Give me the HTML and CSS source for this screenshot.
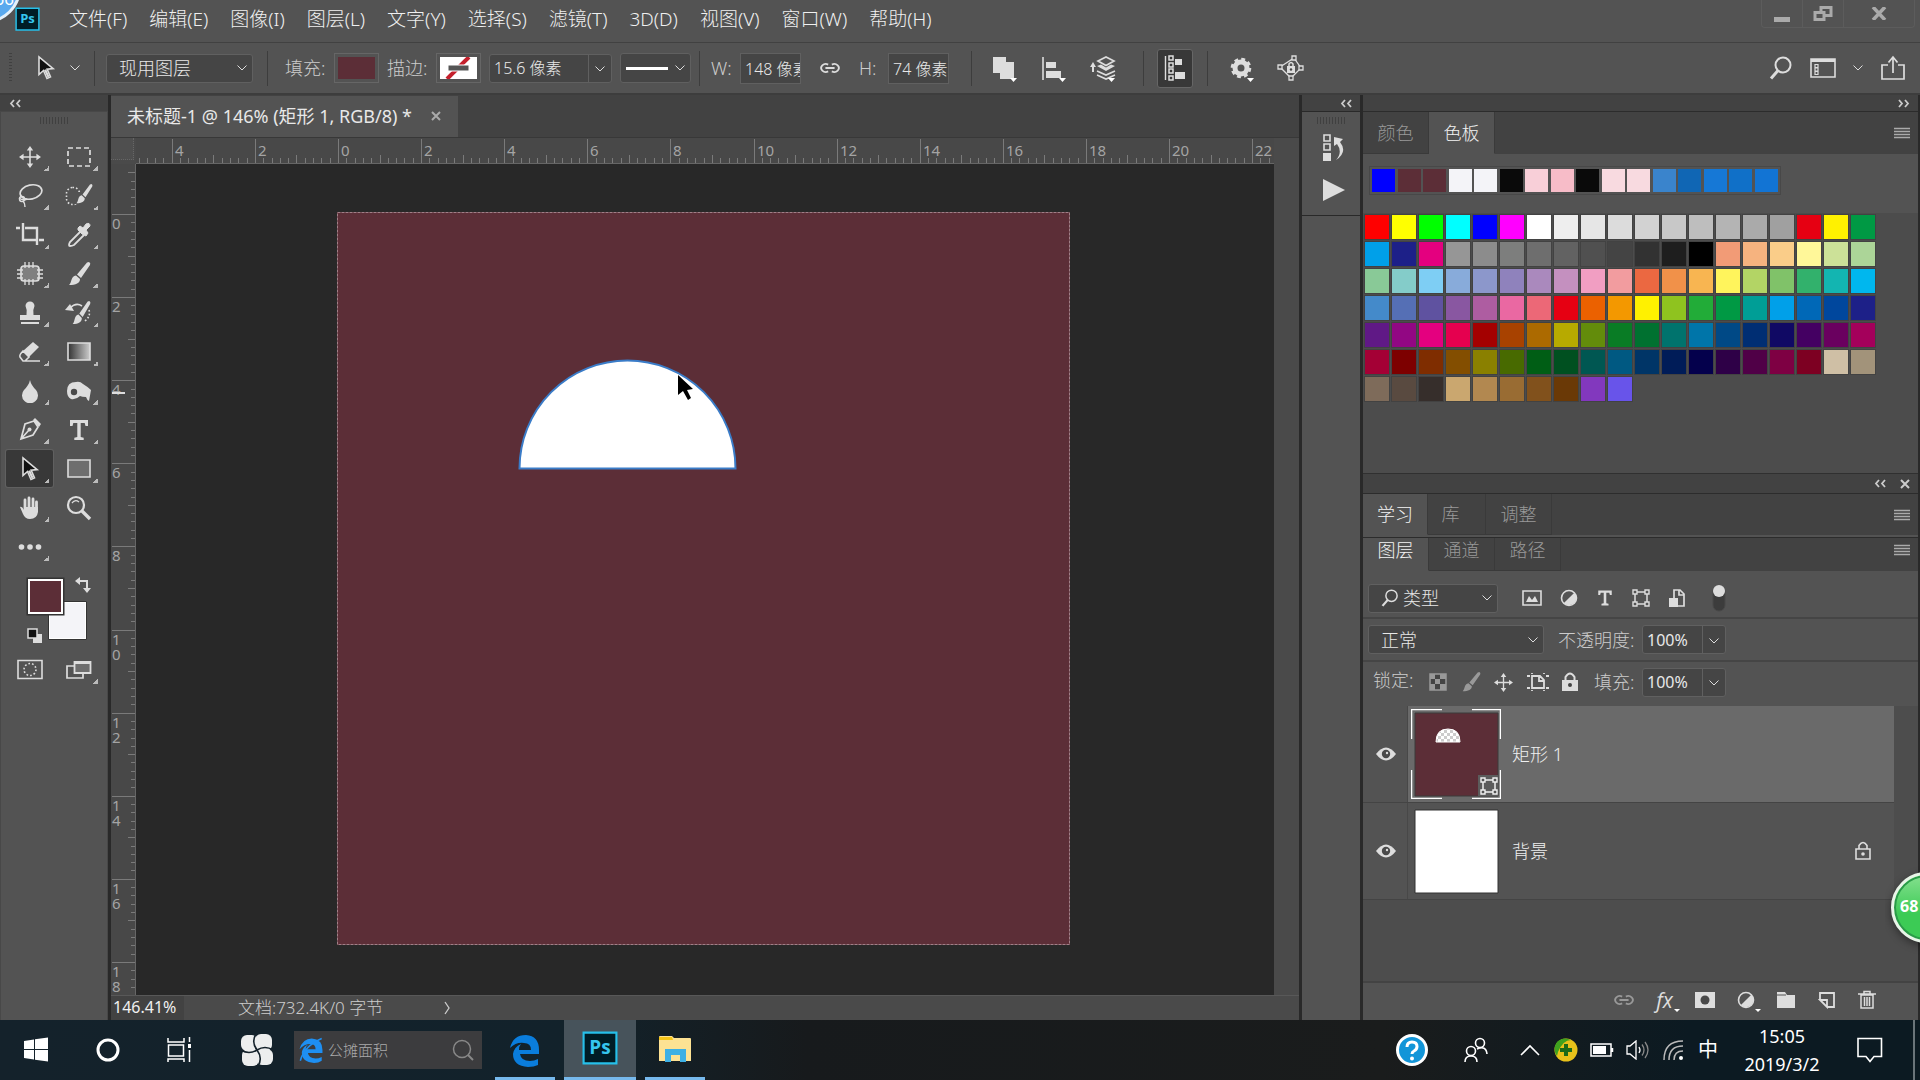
FILE: index.html
```html
<!DOCTYPE html>
<html lang="zh-CN">
<head>
<meta charset="utf-8">
<title>未标题-1 @ 146% (矩形 1, RGB/8)</title>
<link rel="stylesheet" href="styles.css">
</head>
<body>
<svg class="sprite" aria-hidden="true">
  <symbol id="chev" viewBox="0 0 10 6"><path d="M.5 .5l4.500 4.500 4.500-4.500" fill="none" stroke="currentColor" stroke-width="1"/></symbol>
  <symbol id="collapse" viewBox="0 0 12 9"><path d="M5 1L2 4.500 5 8M11 1L8 4.500 11 8" fill="none" stroke="currentColor" stroke-width="1.800"/></symbol>
  <symbol id="expand" viewBox="0 0 12 9"><path d="M1 1l3 3.500L1 8M7 1l3 3.500L7 8" fill="none" stroke="currentColor" stroke-width="1.800"/></symbol>
  <symbol id="cross" viewBox="0 0 10 10"><path d="M1 1l8 8M9 1L1 9" fill="none" stroke="currentColor" stroke-width="2"/></symbol>
  <symbol id="burger" viewBox="0 0 16 12"><path d="M0 1.500h16M0 4.500h16M0 7.500h16M0 10.500h16" stroke="currentColor" stroke-width="1.400"/></symbol>
  <symbol id="arrow" viewBox="0 0 24 26"><path d="M5 2v17.500l4.500-4 3.500 8 3.500-1.600-3.400-7.800 6-.5z" fill="#111" stroke="#ddd" stroke-width="1.600"/><path d="M10 15l3.500 7.500 2-1-3.300-7.300z" fill="#ddd"/></symbol>
  <symbol id="chain" viewBox="0 0 24 12"><path d="M10 2.300A5 4.300 0 1 0 10 9.700M14 2.300A5 4.300 0 1 1 14 9.700M7 6h10" fill="none" stroke="currentColor" stroke-width="2"/></symbol>
  <symbol id="move" viewBox="0 0 24 24"><path d="M12 3v18M3 12h18" stroke="currentColor" stroke-width="1.700"/><path d="M12 0l3.500 5h-7zM12 24l3.500-5h-7zM0 12l5-3.500v7zM24 12l-5-3.500v7z" fill="currentColor"/></symbol>
  <symbol id="brush" viewBox="0 0 24 24"><path d="M22 0q2 1 1 3L14 16l-4-3.500L20 .500zM9 13.500l4 3.500c0 4-4 6-11 6 3-2 1.500-9 7-9.500z" fill="currentColor"/></symbol>
  <symbol id="type" viewBox="0 0 24 24"><path d="M3 2h18v6h-2.500l-.8-3H13.700v14l3 .8V22H7.300v-2.200l3-.8V5H6.300l-.8 3H3z" fill="currentColor"/></symbol>
  <symbol id="lens" viewBox="0 0 24 24"><circle cx="14" cy="9" r="7.500" fill="none" stroke="currentColor" stroke-width="2"/><path d="M9 14.500L2 22.500" stroke="currentColor" stroke-width="3"/></symbol>
  <symbol id="shape" viewBox="0 0 18 18"><path d="M3 3h12v12H3z" fill="none" stroke="currentColor" stroke-width="1.500"/><path d="M1 1h4v4H1zM13 1h4v4h-4zM1 13h4v4H1zM13 13h4v4h-4z" fill="#535353" stroke="currentColor" stroke-width="1.400"/></symbol>
  <symbol id="half" viewBox="0 0 18 18"><circle cx="9" cy="9" r="7.500" fill="none" stroke="currentColor" stroke-width="1.600"/><path d="M14.300 3.700A7.500 7.500 0 0 1 3.700 14.300z" fill="currentColor"/></symbol>
  <symbol id="eye" viewBox="0 0 20 14"><path d="M0 7Q10-6 20 7 10 20 0 7z" fill="currentColor"/><circle cx="10" cy="7" r="4.200" fill="#4a4a4a"/><circle cx="11" cy="6" r="1.200" fill="#ddd"/></symbol>
  <symbol id="ps" viewBox="0 0 34 32"><path d="M1.500 1.500h31v29h-31z" fill="#001d26" stroke="#26c0ea" stroke-width="2"/></symbol>
</svg>

<header class="menubar">
  <span class="ps-badge ps-small"><svg viewBox="0 0 34 32" preserveAspectRatio="none"><use href="#ps"/></svg><b>Ps</b></span>
  <nav>
    <a href="#">文件(F)</a><a href="#">编辑(E)</a><a href="#">图像(I)</a><a href="#">图层(L)</a><a href="#">文字(Y)</a><a href="#">选择(S)</a><a href="#">滤镜(T)</a><a href="#">3D(D)</a><a href="#">视图(V)</a><a href="#">窗口(W)</a><a href="#">帮助(H)</a>
  </nav>
  <div class="winctl">
    <button aria-label="最小化"><svg width="16" height="16"><path d="M0 11h16v5H0z" fill="#aaa"/></svg></button>
    <button aria-label="还原"><svg width="20" height="16"><path d="M8 1.500h10v8H8z" fill="none" stroke="#aaa" stroke-width="3"/><path d="M2 6.500h9v7H2z" fill="#535353" stroke="#aaa" stroke-width="3"/></svg></button>
    <button aria-label="关闭" class="wclose"><svg width="16" height="13"><path d="M2 0l12 13M14 0L2 13" stroke="#aaa" stroke-width="3.500"/></svg></button>
  </div>
  <span class="ball-blue">66</span>
</header>

<section class="options">
  <span class="grip-v"></span>
  <button class="preset" aria-label="路径选择工具"><svg width="24" height="26"><use href="#arrow"/></svg><svg width="10" height="6"><use href="#chev"/></svg></button>
  <div class="group g-select"><div class="sel"><select aria-label="选择"><option>现用图层</option></select><svg width="10" height="6"><use href="#chev"/></svg></div></div>
  <div class="group g-fill">
    <span class="lbl">填充:</span><button class="chip" aria-label="填充"><i class="wine"></i></button>
    <span class="lbl">描边:</span><button class="chip" aria-label="描边"><svg width="37" height="22"><path d="M0 0h37v22H0z" fill="#fff"/><path d="M7 22L29 0" stroke="#c4202c" stroke-width="4"/><path d="M8 8h21v6H8z" fill="#555" stroke="#fff"/></svg></button>
    <div class="combo stroke-w"><input aria-label="描边宽度" value="15.6 像素"><button aria-label="描边宽度选项"><svg width="10" height="6"><use href="#chev"/></svg></button></div>
    <button class="linebtn" aria-label="描边类型"><i></i><svg width="10" height="6"><use href="#chev"/></svg></button>
  </div>
  <div class="group g-size">
    <label for="w">W:</label><input id="w" class="num" value="148 像素">
    <button class="plain chainbtn" aria-label="链接"><svg width="22" height="12"><use href="#chain"/></svg></button>
    <label for="h">H:</label><input id="h" class="num" value="74 像素">
  </div>
  <div class="group g-ops">
    <button class="plain" aria-label="路径操作"><svg width="30" height="30"><path d="M2 4h13v5h8v17H9v-6H2z" fill="#ddd"/><path d="M19 25h7l-3.500 4z" fill="#fff"/></svg></button>
    <button class="plain" aria-label="路径对齐"><svg width="30" height="30"><path d="M3 4v23" stroke="#ddd" stroke-width="1.600"/><path d="M6 9h10v6H6zM6 18h15v7H6z" fill="#ddd"/><path d="M19 25h7l-3.500 4z" fill="#fff"/></svg></button>
    <button class="plain" aria-label="路径排列"><svg width="30" height="30"><path d="M4 19v-6" stroke="#ddd" stroke-width="2"/><path d="M1 14l3-5 3 5z" fill="#ddd"/><path d="M9 8l8-4 8 4-8 4.500z" fill="none" stroke="#ddd" stroke-width="1.700"/><path d="M8 13l4-1.500 5 3 5-3 4 1.500-9 5z" fill="#ddd"/><path d="M8 18l9 4 9-4M8 22l9 4 9-4" fill="none" stroke="#ddd" stroke-width="1.600"/><path d="M19 25h7l-3.500 4z" fill="#fff"/></svg></button>
  </div>
  <div class="group g-edge"><button class="pressed" aria-label="对齐边缘"><svg width="22" height="26"><path d="M1.500 1v24" stroke="#ddd" stroke-width="1.400"/><path d="M5 1h4v4H5zM5 8h4v4H5zM5 14h4v4H5zM5 21h4v4H5z" fill="none" stroke="#ddd" stroke-width="1.500"/><path d="M11 4h7v6h-7zM11 17h10v7H11z" fill="#ddd"/></svg></button></div>
  <div class="group g-gear">
    <button class="plain" aria-label="设置"><svg width="28" height="30"><circle cx="13" cy="15" r="6" fill="none" stroke="#ddd" stroke-width="5"/><circle cx="13" cy="15" r="8.800" fill="none" stroke="#ddd" stroke-width="3" stroke-dasharray="3.800 3.110"/><path d="M19 25h7l-3.500 4z" fill="#fff"/></svg></button>
    <button class="plain" aria-label="约束路径"><svg width="28" height="30"><path d="M17 5l7 10-10 10L3 14z" fill="none" stroke="#ddd" stroke-width="1.300"/><path d="M15 3h4v4h-4zM22 13h4v4h-4zM12 23h4v4h-4zM1 12h4v4H1z" fill="#535353" stroke="#ddd" stroke-width="1.300"/><path d="M10 13h8v7h-8z" fill="#ddd"/><path d="M12 13v-2q2-3 4 0v2" fill="none" stroke="#ddd" stroke-width="1.500"/><circle cx="14" cy="16.500" r="1.200" fill="#444"/></svg></button>
  </div>
  <div class="opt-right">
    <button class="plain" aria-label="搜索"><svg width="24" height="24"><use href="#lens"/></svg></button>
    <button class="plain" aria-label="工作区"><svg width="26" height="22"><path d="M1 2h24v18H1zM1 3h24" fill="none" stroke="#ddd" stroke-width="1.600"/><path d="M1 2h24v3H1z" fill="#ddd"/><path d="M5 7.500h3v3H5zM5 11h3v3H5zM5 14.500h3v3H5z" fill="none" stroke="#ddd" stroke-width="1.200"/></svg></button>
    <svg width="10" height="6"><use href="#chev"/></svg>
    <button class="plain" aria-label="共享"><svg width="26" height="26"><path d="M8 10H2v14h22V10h-6M13 18V3M8.500 7.500L13 2l4.500 5.500" fill="none" stroke="#ddd" stroke-width="1.700"/></svg></button>
  </div>
</section>

<main class="work">
  <aside class="toolbox">
    <div class="dockhead left"><svg width="12" height="9"><use href="#collapse"/></svg></div>
    <div class="toolpanel">
      <i class="grip-h"></i>
      <div class="tools">
        <button class="t" aria-label="移动"><svg width="22" height="22"><use href="#move"/></svg></button>
        <button class="t" aria-label="矩形选框"><svg width="26" height="22"><path d="M2 2h22v18H2z" fill="none" stroke="#ddd" stroke-width="1.700" stroke-dasharray="5 3"/></svg></button>
        <button class="t" aria-label="套索"><svg width="26" height="26"><ellipse cx="14" cy="9" rx="11" ry="7" transform="rotate(-12 14 9)" fill="none" stroke="#ddd" stroke-width="1.700"/><circle cx="5" cy="16" r="2.500" fill="none" stroke="#ddd" stroke-width="1.400"/><path d="M2 15q4 3 8 1M6 18q2 2 2 6" fill="none" stroke="#ddd" stroke-width="1.400"/></svg></button>
        <button class="t" aria-label="快速选择"><svg width="28" height="24"><rect x="1.500" y="3.500" width="13" height="17" rx="6" fill="none" stroke="#ddd" stroke-width="1.600" stroke-dasharray="1.600 2"/><path d="M9 8h8v12H9z" fill="#535353"/><svg x="10" y="0" width="18" height="20" viewBox="0 0 24 24" preserveAspectRatio="none"><use href="#brush"/></svg></svg></button>
        <button class="t" aria-label="裁剪"><svg width="28" height="26"><path d="M0 6h4M7 1v17h13M9 6h12v17M23 18h5" fill="none" stroke="#ddd" stroke-width="2.400"/></svg></button>
        <button class="t" aria-label="吸管"><svg width="26" height="26"><path d="M14 10l-10 10q-2 4 0 4t4-1l10-10" fill="none" stroke="#ddd" stroke-width="1.800"/><path d="M12 6l2-2 3 2 3-4q4-2 4 2l-4 4 2 3-2 3-4-2-4-4z" fill="#ddd" stroke="#ddd"/></svg></button>
        <button class="t" aria-label="修补"><svg width="26" height="24"><rect x="4" y="4" width="18" height="15" rx="3" fill="#808080" stroke="#ddd" stroke-width="1.700"/><path d="M8 0v6M12 0v6M16 0v6M8 17v6M12 17v6M16 17v6M0 8h6M0 12h6M0 16h6M20 8h6M20 12h6M20 16h6" stroke="#ddd" stroke-width="1.300"/></svg></button>
        <button class="t" aria-label="画笔"><svg width="24" height="24"><use href="#brush"/></svg></button>
        <button class="t" aria-label="仿制图章"><svg width="22" height="24"><path d="M6.500 5a4.500 4.500 0 1 1 9 0q-2 4-1 9h6.500v5H1v-5h6.500q1-5-1-9zM2 21h18v2H2z" fill="#ddd"/></svg></button>
        <button class="t" aria-label="历史记录画笔"><svg width="28" height="26"><svg x="6" y="1" width="20" height="24" viewBox="0 0 24 24" preserveAspectRatio="none"><use href="#brush"/></svg><path d="M5 8q6-6 12-2" fill="none" stroke="#ddd" stroke-width="1.600"/><path d="M0 10l5-6 4 7z" fill="#ddd"/><path d="M24 10q2 6-4 11" fill="none" stroke="#ddd" stroke-width="1.600" stroke-dasharray="1.600 2"/></svg></button>
        <button class="t" aria-label="橡皮擦"><svg width="24" height="22"><path d="M15 1l6 5-10 10-6-6z" fill="#ddd"/><path d="M5 10l6 6-4 4H5l-3-4q-1-2 3-6zM6 20h16" fill="none" stroke="#ddd" stroke-width="1.600"/></svg></button>
        <button class="t" aria-label="渐变"><svg width="26" height="22"><defs><linearGradient id="gr"><stop stop-color="#333"/><stop offset="1" stop-color="#ccc"/></linearGradient></defs><path d="M2 2h22v17H2z" fill="url(#gr)" stroke="#ddd" stroke-width="1.600"/></svg></button>
        <button class="t" aria-label="模糊"><svg width="18" height="24"><path d="M9 1q1 5 6 10a8 8 0 1 1-12 0q5-5 6-10z" fill="#ddd"/></svg></button>
        <button class="t" aria-label="海绵"><svg width="26" height="24"><path d="M1 12Q1 3 10 3q4-1 7 2 5 3 8 6l-2 11q-2-1-3-4-4 0-6-1-4 4-9 3-4-2-4-8z" fill="#ddd"/><circle cx="8" cy="13" r="3.200" fill="#4a4a4a"/></svg></button>
        <button class="t" aria-label="钢笔"><svg width="24" height="26"><path d="M16 4l-9 3-4 15 12-4 5-8zM3 22l8-9" fill="none" stroke="#ddd" stroke-width="1.700"/><circle cx="11.500" cy="12.500" r="2" fill="#ddd"/><path d="M15 3l2-2 6 6-2 3z" fill="#ddd"/></svg></button>
        <button class="t" aria-label="文字"><svg width="26" height="24"><use href="#type"/></svg></button>
        <button class="t on" aria-label="路径选择"><svg width="24" height="26"><use href="#arrow"/></svg></button>
        <button class="t" aria-label="矩形"><svg width="26" height="22"><path d="M2 2h22v17H2z" fill="#6e6e6e" stroke="#ddd" stroke-width="1.600"/></svg></button>
        <button class="t" aria-label="抓手"><svg width="22" height="24"><path d="M6 14V4M10 12V2M14 12V3M17.500 14V6" stroke="#ddd" stroke-width="2.800" stroke-linecap="round"/><path d="M1 11q2-1 4 3V11h14v5q-1 7-8 7-5 0-7-5z" fill="#ddd"/></svg></button>
        <button class="t last" aria-label="缩放"><svg width="26" height="26"><circle cx="10" cy="10" r="8" fill="none" stroke="#ddd" stroke-width="2.200"/><path d="M6 8q3-4 7-1" fill="none" stroke="#ddd" stroke-width="1.300"/><path d="M16 16l8 8" stroke="#ddd" stroke-width="3.400"/></svg></button>
        <button class="t" aria-label="更多"><svg width="24" height="8"><circle cx="3.500" cy="4" r="2.800" fill="#ddd"/><circle cx="12" cy="4" r="2.800" fill="#ddd"/><circle cx="20.500" cy="4" r="2.800" fill="#ddd"/></svg></button>
      </div>
      <svg class="colors" width="72" height="70" viewBox="24 576 72 70" role="img" aria-label="前景色和背景色">
        <path d="M48.500 601.500h38v38h-38z" fill="#f4f4f8" stroke="#333"/><path d="M49.500 602.500h36v36h-36z" fill="none" stroke="#fff"/>
        <path d="M26.500 577.500h38v38h-38z" fill="#333"/><path d="M29 580h33v33H29z" fill="#5c2e37" stroke="#fff" stroke-width="2"/>
        <path d="M78 581h9v9" fill="none" stroke="#ddd" stroke-width="2"/><path d="M75 581l5-4v8zM87 593l-4-5h8z" fill="#ddd"/>
        <path d="M33 634h9v9h-9z" fill="#ddd"/><path d="M28 629h9v9h-9z" fill="#111" stroke="#ddd" stroke-width="1.500"/>
      </svg>
      <div class="tools modes">
        <button class="t last" aria-label="快速蒙版"><svg width="28" height="22"><path d="M2 1.500h24v18H2z" fill="none" stroke="#ddd" stroke-width="1.600"/><circle cx="14" cy="10.500" r="6" fill="none" stroke="#ddd" stroke-width="1.600" stroke-dasharray="1.700 2"/></svg></button>
        <button class="t" aria-label="屏幕模式"><svg width="28" height="22"><path d="M2 7h16v12H2z" fill="none" stroke="#ddd" stroke-width="1.700"/><path d="M9.500 3h16v11h-16z" fill="#6e6e6e" stroke="#ddd" stroke-width="1.800"/><path d="M9 2h17v3H9z" fill="#ddd"/></svg></button>
      </div>
    </div>
  </aside>

  <section class="doc">
    <div class="tabbar"><div class="doctab"><span>未标题-1 @ 146% (矩形 1, RGB/8) *</span><button class="plain" aria-label="关闭文档"><svg width="10" height="10"><use href="#cross"/></svg></button></div></div>
    <div class="stage">
      <i class="corner"></i>
      <svg class="hruler" id="hruler"></svg>
      <svg class="vruler" id="vruler"></svg>
      <div class="canvas">
        <svg class="artboard" viewBox="0 0 733 733" role="img" aria-label="画布">
          <path d="M0 0h733v733H0z" fill="#5c2e37"/><path d="M.500.500h732v732H.500z" fill="none" stroke="#a08088" stroke-dasharray="3 1"/>
          <path d="M182.500 256.500a108 108 0 0 1 216 0z" fill="#fff" stroke="#3a7cc8" stroke-width="2"/>
          <path d="M341 163v20l5-4 5 9 3-2-4-8 6-1z" fill="#000"/>
        </svg>
      </div>
    </div>
    <footer class="status"><input class="zoomv" aria-label="缩放比例" value="146.41%"><span class="info">文档:732.4K/0 字节</span><button class="plain" aria-label="状态选项"><svg width="8" height="14"><path d="M1 1l4 6-4 6" fill="none" stroke="#ccc" stroke-width="1.300"/></svg></button></footer>
  </section>

  <aside class="strip">
    <div class="dockhead right"><svg width="12" height="9"><use href="#collapse"/></svg></div>
    <div class="stripbody">
      <i class="grip-h"></i>
      <button class="plain" aria-label="历史记录"><svg width="24" height="28"><path d="M2 1h6v6H2zM2 10h6v6H2z" fill="none" stroke="#ddd" stroke-width="1.600"/><path d="M1 19h8v8H1z" fill="#ddd"/><path d="M14 26q12-8 4-18l3-3-9-2v9l3-2q6 8-1 16z" fill="#ddd"/></svg></button>
      <button class="plain" aria-label="动作"><svg width="24" height="22"><path d="M1 0l22 11L1 22z" fill="#ddd"/></svg></button>
    </div>
    <div class="striprest"></div>
  </aside>

  <aside class="panels">
    <div class="dockhead right"><svg width="12" height="9"><use href="#expand"/></svg></div>
    <div class="tabs tall"><button>颜色</button><button class="sel-tab">色板</button><svg class="menu" width="16" height="12"><use href="#burger"/></svg></div>
    <div class="recent"><div class="recent-row" id="recent"></div></div>
    <div class="swatches"><div class="swgrid" id="swatches"></div></div>
    <div class="dockhead right mid"><svg width="12" height="9"><use href="#collapse"/></svg><svg width="10" height="10"><use href="#cross"/></svg></div>
    <div class="tabs tall learn"><button class="sel-tab">学习</button><button>库</button><button>调整</button><svg class="menu" width="16" height="12"><use href="#burger"/></svg></div>
    <div class="tabs low"><button class="sel-tab">图层</button><button>通道</button><button>路径</button><svg class="menu" width="16" height="12"><use href="#burger"/></svg></div>

    <div class="lrow filter">
      <div class="sel kind"><svg class="pre" width="18" height="18"><use href="#lens"/></svg><select aria-label="过滤类型"><option>类型</option></select><svg width="10" height="6"><use href="#chev"/></svg></div>
      <div class="ficons">
        <button class="plain" aria-label="像素"><svg width="20" height="18"><path d="M1 2h18v14H1z" fill="none" stroke="#ddd" stroke-width="1.600"/><path d="M4 13l3-6 3 4 3-4 3 6z" fill="#ddd"/></svg></button>
        <button class="plain" aria-label="调整图层"><svg width="18" height="18"><use href="#half"/></svg></button>
        <button class="plain" aria-label="文字图层"><svg width="18" height="20"><use href="#type"/></svg></button>
        <button class="plain" aria-label="形状图层"><svg width="18" height="18"><use href="#shape"/></svg></button>
        <button class="plain" aria-label="智能对象"><svg width="18" height="20"><path d="M6 10V2h6l4 4v12h-7M11 2v5h5" fill="none" stroke="#ddd" stroke-width="1.700"/><path d="M1 10h9v9H1z" fill="#ddd"/></svg></button>
      </div>
      <button class="plain" aria-label="过滤开关"><svg width="14" height="28"><rect x="1" y="2" width="12" height="25" rx="6" fill="#3c3c3c" stroke="#484848"/><circle cx="7" cy="7" r="6" fill="#ddd"/></svg></button>
    </div>
    <div class="lrow blend">
      <div class="sel mode"><select aria-label="混合模式"><option>正常</option></select><svg width="10" height="6"><use href="#chev"/></svg></div>
      <label for="op">不透明度:</label>
      <div class="combo"><input id="op" value="100%"><button aria-label="不透明度选项"><svg width="10" height="6"><use href="#chev"/></svg></button></div>
    </div>
    <div class="lrow lock">
      <span class="lbl">锁定:</span>
      <div class="licons">
        <button class="plain" aria-label="锁定透明像素"><svg width="18" height="18"><path d="M1 1h16v16H1z" fill="#444" stroke="#999" stroke-width="1.500"/><path d="M1 1h5v5H1zM11 1h6v5h-6zM6 6h5v5H6zM1 11h5v6H1zM11 11h6v6h-6z" fill="#999"/></svg></button>
        <button class="plain dim" aria-label="锁定图像像素"><svg width="20" height="20"><use href="#brush"/></svg></button>
        <button class="plain" aria-label="锁定位置"><svg width="19" height="19"><use href="#move"/></svg></button>
        <button class="plain" aria-label="防止自动嵌套"><svg width="22" height="18"><path d="M5 3h8l4 4v8H5zM12 3v5h5M0 3h3M19 3h3M0 15h3M19 15h3M5 0v1M17 0v1M5 17v1M17 17v1" fill="none" stroke="#ddd" stroke-width="1.800"/></svg></button>
        <button class="plain" aria-label="锁定全部"><svg width="16" height="20"><path d="M0 8h16v11H0z" fill="#ddd"/><path d="M3.500 9V5q4.500-7 9 0v4" fill="none" stroke="#ddd" stroke-width="2"/><circle cx="8" cy="13" r="2" fill="#444"/></svg></button>
      </div>
      <label for="fl">填充:</label>
      <div class="combo"><input id="fl" value="100%"><button aria-label="填充选项"><svg width="10" height="6"><use href="#chev"/></svg></button></div>
    </div>

    <ul class="layers">
      <li class="active">
        <button class="eye" aria-label="可见性"><svg width="20" height="14"><use href="#eye"/></svg></button>
        <div class="lbody"><svg class="thumb" width="90" height="90">
          <path d="M4 4h83v83H4z" fill="#5c2e37" stroke="#3a3a3a"/>
          <defs><pattern id="chk" width="6" height="6" patternUnits="userSpaceOnUse"><path d="M0 0h6v6H0z" fill="#fff"/><path d="M0 0h3v3H0zM3 3h3v3H3z" fill="#ccc"/></pattern></defs>
          <path d="M25 33q0-13 12-13t12 13z" fill="url(#chk)" stroke="#fff"/>
          <path d="M67 66h20v21H67z" fill="#5c5c5c"/><svg x="69" y="68" width="18" height="18"><use href="#shape"/></svg>
          <path d="M.500 30V.500H31M61 .500h28.500V30M.500 61v28.500H31M61 89.500h28.500V61" fill="none" stroke="#fff" stroke-width="1.500"/></svg>
          <span>矩形 1</span></div>
      </li>
      <li>
        <button class="eye" aria-label="可见性"><svg width="20" height="14"><use href="#eye"/></svg></button>
        <div class="lbody"><svg class="thumb" width="90" height="90"><path d="M4 4h83v83H4z" fill="#fff" stroke="#333"/></svg><span>背景</span>
        <svg class="padlock" width="16" height="20"><path d="M1 8h14v10H1zM4 8V4.500q4-6 8 0V8" fill="none" stroke="#ddd" stroke-width="1.600"/><circle cx="8" cy="13" r="1.800" fill="#ddd"/></svg></div>
      </li>
    </ul>
    <footer class="lfoot">
      <button class="plain dim" aria-label="链接图层"><svg width="22" height="12"><use href="#chain"/></svg></button>
      <button class="plain fx" aria-label="图层样式"><em>fx</em><svg class="dd" width="6" height="3"><path d="M0 0h6L3 3z" fill="#fff"/></svg></button>
      <button class="plain" aria-label="蒙版"><svg width="20" height="16"><path d="M0 0h20v16H0z" fill="#ddd"/><circle cx="10" cy="8" r="4.500" fill="#484848"/></svg></button>
      <button class="plain" aria-label="调整"><svg width="18" height="18"><use href="#half"/></svg><svg class="dd" width="6" height="3"><path d="M0 0h6L3 3z" fill="#fff"/></svg></button>
      <button class="plain" aria-label="新建组"><svg width="18" height="16"><path d="M0 0h8l2 3h8v13H0z" fill="#ddd"/><path d="M0 3h9" stroke="#535353"/></svg></button>
      <button class="plain" aria-label="新建图层"><svg width="18" height="18"><path d="M2 9V2h14v14H9M2 9h7v7z" fill="none" stroke="#ddd" stroke-width="1.800"/></svg></button>
      <button class="plain" aria-label="删除"><svg width="18" height="20"><path d="M3 5h12v13H3zM0 4h18M6 4V1.500h6V4M6.500 7v9M9 7v9M11.500 7v9" fill="none" stroke="#ddd" stroke-width="1.500"/></svg></button>
    </footer>
    <span class="ball-green">68</span>
  </aside>
</main>

<footer class="taskbar">
  <button class="cell" aria-label="开始"><svg width="26" height="26"><path d="M1 4l10-1.500V12H1zM12 2.300L25 .500V12H12zM1 13h10v9.500L1 21zM12 13h13v11.500L12 22.700z" fill="#fff"/></svg></button>
  <button class="cell" aria-label="Cortana"><svg width="26" height="26"><circle cx="13" cy="13" r="10" fill="none" stroke="#fff" stroke-width="3"/></svg></button>
  <button class="cell" aria-label="任务视图"><svg width="26" height="26"><path d="M1 1v4h16V1M1.500 8h15v11h-15zM1 25v-3h16v3M22.500 0v5M22.500 13v12" fill="none" stroke="#fff" stroke-width="1.500"/><path d="M21 7h3v4h-3z" fill="#fff"/></svg></button>
  <button class="cell fan" aria-label="助手"><svg width="34" height="34"><g fill="#eceeee"><rect x="1" y="2" width="17" height="16" rx="6"/><rect x="15" y="1" width="17" height="17" rx="6"/><rect x="2" y="16" width="17" height="17" rx="6"/><rect x="16" y="16" width="17" height="16" rx="6"/><circle cx="17" cy="17" r="5"/></g><path d="M17 17Q11 9 16 1M17 17q6 8 1 16M17 17Q9 22 1 17M17 17q8-5 16 0" fill="none" stroke="#14222b" stroke-width="1.600"/></svg></button>
  <label class="tsearch"><svg width="26" height="26" viewBox="0 0 34 34"><path d="M2 16Q6 2 18 2q14 1 14 15v4H13q1 7 10 7 4 0 8-2v5q-4 3-10 3Q5 33 5 20q1-7 8-10-3 2-3 6h13q0-7-7-7Q8 9 2 16z" fill="#1e8ff2"/><path d="M3 31Q8 12 31 2" fill="none" stroke="#1e8ff2" stroke-width="2"/></svg><input aria-label="搜索" value="公摊面积"><svg width="22" height="22"><circle cx="10" cy="10" r="8.500" fill="none" stroke="#888" stroke-width="1.500"/><path d="M16 16l5 5" stroke="#888" stroke-width="2"/></svg></label>
  <div class="apps">
    <button class="cell run" aria-label="Edge"><svg width="34" height="34"><path d="M2 15Q5 2 18 2q13 1 13 15v4H12q1 7 10 7 4 0 8-2v6q-4 2-10 2Q5 33 5 21q1-7 8-10-2 2-2 6h12q0-7-7-7Q8 9 2 15z" fill="#0a7ddc"/></svg></button>
    <button class="cell run front"><span class="ps-badge"><svg viewBox="0 0 34 32"><use href="#ps"/></svg><b>Ps</b></span></button>
    <button class="cell run" aria-label="文件资源管理器"><svg width="34" height="30"><path d="M1 2q0-1 1-1h12l2 2h16q1 0 1 1v22H1z" fill="#fde293"/><path d="M1 2h13l1 3H1z" fill="#f5c518"/><path d="M7 27V14h21v13h-6v-7h-9v7z" fill="#3eb0e4"/></svg></button>
  </div>
  <div class="tray">
    <button class="cell help" aria-label="帮助"><svg width="34" height="34"><circle cx="17" cy="17" r="14.500" fill="#1295d8" stroke="#fff" stroke-width="3"/><path d="M12 14q0-5 5-5t5 4.500q0 3-3 4.500-2 1-2 3" fill="none" stroke="#fff" stroke-width="3"/><circle cx="17" cy="25.500" r="2" fill="#fff"/></svg></button>
    <button class="cell" aria-label="人脉"><svg width="26" height="26"><g fill="none" stroke="#fff" stroke-width="1.600"><circle cx="17" cy="6" r="4.500"/><circle cx="8" cy="14" r="4.500"/><path d="M2 25q0-6 6-6t6 6M14 12q9-4 10 5"/></g></svg></button>
    <button class="cell s" aria-label="显示隐藏的图标"><svg width="20" height="12"><path d="M1 11l9-9 9 9" fill="none" stroke="#fff" stroke-width="1.600"/></svg></button>
    <button class="cell s" aria-label="安全卫士"><svg width="24" height="24"><circle cx="12" cy="12" r="11.500" fill="#e8c21a"/><path d="M3 4q6-6 14-2-8 0-13 12l-1 4Q-2 11 3 4z" fill="#3fa21e"/><path d="M12 6v12M6 12h12" stroke="#1c6a18" stroke-width="4"/></svg></button>
    <button class="cell s" aria-label="电池"><svg width="24" height="14"><path d="M1 1h20v12H1zM22.500 5v4" fill="none" stroke="#fff" stroke-width="1.500"/><path d="M3 3h13v8H3z" fill="#fff"/></svg></button>
    <button class="cell s" aria-label="音量"><svg width="24" height="20"><path d="M1 6h3l6-5v18l-6-5H1z" fill="none" stroke="#fff" stroke-width="1.300"/><path d="M13 7q2 3 0 6" fill="none" stroke="#fff" stroke-width="1.300"/><path d="M16 4.500q4 5.500 0 11M19 2q6 8 0 16" fill="none" stroke="#888" stroke-width="1.300"/></svg></button>
    <button class="cell s" aria-label="网络"><svg width="22" height="22"><path d="M1 21Q1 2 20 2M6 21Q6 7 20 7M11 21Q11 12 20 12" fill="none" stroke="#bbb" stroke-width="1.500"/><circle cx="18" cy="19" r="2" fill="#fff"/></svg></button>
    <button class="cell s ime">中</button>
    <time class="clock"><span>15:05</span><span>2019/3/2</span></time>
    <button class="cell note" aria-label="通知"><svg width="26" height="26"><path d="M1 1.500h23.500v18H17l-4 5-4-5H1z" fill="none" stroke="#fff" stroke-width="1.600"/></svg></button>
  </div>
</footer>
<script src="script.js"></script>
</body>
</html>
```
FILE: styles.css
```css
* { box-sizing: border-box; }
html, body { margin: 0; height: 100%; }
body {
  display: grid;
  grid-template-rows: 43px 52px minmax(0, 1fr) 60px;
  background: #292929;
  color: #ddd;
  font: 300 18px/24px "Noto Sans", "Noto Sans CJK SC", sans-serif;
  overflow: hidden;
}
svg { display: block; flex: none; }
.sprite { position: absolute; width: 0; height: 0; }
button, input, select { font: inherit; color: inherit; margin: 0; padding: 0; border: 0; background: none; border-radius: 0; }
button { display: flex; align-items: center; justify-content: center; }
.plain { position: relative; flex: none; }
a { color: inherit; text-decoration: none; }

.menubar { position: relative; display: flex; align-items: flex-start; background: #535353; border-bottom: 1px solid #414141; padding-left: 15px; overflow: hidden; }
.menubar nav { display: flex; gap: 22px; margin-left: 29px; padding-top: 7px; flex: 1; white-space: nowrap; color: #f0f0f0; font-size: 19px; }
.ps-badge { display: grid; width: 36px; height: 34px; flex: none; }
.ps-badge > * { grid-area: 1 / 1; width: 100%; height: 100%; }
.ps-badge b { color: #35c6ee; font: 700 19px/32px "Open Sans", sans-serif; text-align: center; }
.ps-small { width: 25px; height: 24px; margin-top: 7px; }
.ps-small b { font-size: 13px; line-height: 23px; }
.winctl { display: flex; margin-right: 5px; border: 1px solid #5c5c5c; border-top: 0; border-radius: 0 0 4px 4px; }
.winctl button { width: 41px; height: 27px; border-right: 1px solid #5c5c5c; }
.winctl .wclose { width: 70px; border: 0; }
.ball-blue { position: absolute; left: -49px; top: -47px; width: 70px; height: 70px; border-radius: 50%; border: 3px solid #e4f0fa; background: #5aa9ee; color: #fff; font: 400 17px/20px "Noto Sans", sans-serif; text-align: right; padding: 33px 4px 0 0; }

.options { display: flex; align-items: center; background: #535353; border-bottom: 2px solid #3d3d3d; padding: 0 14px 0 9px; overflow: hidden; }
.grip-v { width: 3px; height: 30px; background: repeating-linear-gradient(#404040 0 1px, transparent 1px 3px); }
.preset { width: 82px; gap: 12px; padding-left: 8px; }
.group { display: flex; align-items: center; height: 35px; border-left: 1px solid #3d3d3d; gap: 8px; flex: none; }
.g-select { padding: 0 14px 0 11px; }
.g-fill { padding: 0 8px 0 17px; }
.g-size { padding: 0 22px 0 11px; }
.g-ops { padding: 0 24px 0 19px; gap: 19px; }
.g-edge { padding: 0 14px 0 13px; }
.g-gear { padding-left: 20px; gap: 21px; }
.lbl, label { white-space: nowrap; color: #ccc; }
.g-fill .lbl { width: 41px; }
.g-size label { width: 21px; }
.chainbtn { width: 42px; }
.opt-right { display: flex; align-items: center; gap: 17px; margin-left: auto; }
.sel { position: relative; display: flex; align-items: center; width: 147px; height: 29px; background: #454545; border: 1px solid #606060; border-radius: 3px; padding: 0 5px 0 12px; }
.sel select { appearance: none; flex: 1; min-width: 0; height: 27px; color: #e8e8e8; outline: 0; }
.chip { width: 45px; height: 30px; border: 1px solid #666; flex: none; }
.wine { width: 37px; height: 22px; background: #5c2e37; }
.combo { display: flex; height: 29px; width: 84px; background: #454545; border: 1px solid #606060; border-radius: 3px; font-size: 16px; font-weight: 400; flex: none; }
.combo input { flex: 1; min-width: 0; padding-left: 4px; color: #e8e8e8; }
.combo button { width: 23px; border-left: 1px solid #606060; padding-top: 2px; }
.combo.stroke-w { width: 123px; font-weight: 300; }
.linebtn { width: 71px; height: 30px; background: #454545; border: 1px solid #606060; border-radius: 3px; gap: 7px; flex: none; }
.linebtn i { width: 42px; height: 3px; background: #fff; }
.num { width: 61px; height: 31px; background: #454545; border: 1px solid #606060; padding-left: 4px; font-size: 16px; color: #e8e8e8; }
.pressed { width: 36px; height: 39px; background: #383838; border: 1px solid #666; border-radius: 3px; }

.work { display: flex; min-height: 0; }
.dockhead { display: flex; align-items: center; height: 16px; background: #424242; color: #ccc; flex: none; }
.dockhead.left { padding-left: 9px; }
.dockhead.right { justify-content: flex-end; padding-right: 8px; gap: 14px; }
.grip-h { display: block; width: 28px; height: 7px; background: repeating-linear-gradient(90deg, #404040 0 1px, transparent 1px 3px); }

.toolbox { width: 108px; margin-right: 3px; display: flex; flex-direction: column; flex: none; }
.toolpanel { flex: 1; background: #535353; border: 1px solid #484848; border-bottom: 0; display: flex; flex-direction: column; align-items: center; padding-top: 5px; min-height: 0; }
.tools { display: grid; grid-template-columns: 49px 49px; grid-auto-rows: 39px; margin-top: 13px; }
.t { position: relative; color: #ddd; }
.t::after { content: ""; position: absolute; right: 5px; bottom: 5px; width: 5px; height: 5px; background: linear-gradient(135deg, transparent 50%, #bbb 50%); }
.t.last::after { display: none; }
.t.on { background: #383838; box-shadow: 0 0 0 1px #606060; border-radius: 2px; margin: 1px; }
.t.on::after { right: 4px; bottom: 4px; }
.colors { margin: 10px 0 0 12px; }
.modes { margin-top: 4px; }

.doc { flex: 1; min-width: 0; display: flex; flex-direction: column; margin-right: 3px; background: #4a4a4a; }
.tabbar { height: 43px; background: #424242; border-bottom: 1px solid #383838; padding-top: 1px; display: flex; flex: none; }
.doctab { display: flex; align-items: center; justify-content: space-between; width: 347px; padding: 0 17px 2px 16px; background: #535353; color: #e8e8e8; white-space: nowrap; font-weight: 400; }
.doctab .plain { color: #aaa; }
.stage { flex: 1; min-height: 0; display: grid; grid-template: 26px minmax(0, 1fr) / 25px minmax(0, 1fr); margin-right: 25px; }
.corner { border: 1px dotted #666; border-width: 0 1px 1px 0; margin: 0 2px 4px 0; background: #4f4f4f; }
.hruler, .vruler { width: 100%; height: 100%; overflow: hidden; background: #484848; }
.hruler { border-bottom: 1px solid #666; }
.vruler { border-right: 1px solid #666; }
.hruler text, .vruler text { font-size: 15px; font-weight: 400; fill: #a4a4a4; }
.canvas { background: #282828; display: flex; align-items: center; justify-content: center; padding: 0 4px 2px 0; overflow: hidden; }
.artboard { width: 733px; height: 733px; }
.status { display: flex; align-items: center; height: 25px; background: #4a4a4a; border-top: 1px solid #585858; flex: none; font-size: 17px; }
.zoomv { width: 73px; height: 24px; padding: 0 0 3px 2px; background: #424242; font-size: 16px; font-weight: 400; color: #f0f0f0; }
.info { width: 260px; padding-left: 54px; color: #ccc; white-space: nowrap; }

.strip { width: 58px; display: flex; flex-direction: column; margin-right: 3px; flex: none; }
.stripbody { height: 103px; margin-top: 1px; padding-top: 5px; background: #535353; display: flex; flex-direction: column; align-items: center; }
.stripbody .plain { margin: 10px 0 0 6px; }
.stripbody .plain + .plain { margin-top: 17px; }
.striprest { flex: 1; margin-top: 1px; background: #535353; }

.panels { position: relative; width: 555px; margin-right: 2px; display: flex; flex-direction: column; background: #535353; flex: none; min-height: 0; }
.tabs { display: flex; background: #424242; flex: none; color: #999; border-top: 1px solid #2c2c2c; }
.tabs button { width: 66px; border-right: 1px solid #3a3a3a; border-bottom: 1px solid #3a3a3a; }
.tabs .sel-tab { background: #535353; color: #f4f4f4; border-bottom-color: #535353; }
.tabs .menu { margin: auto 8px auto auto; color: #aaa; }
.tall { height: 43px; }
.learn { border-bottom: 2px solid #535353; height: 44px; }
.learn .sel-tab { width: 65px; }
.learn button:nth-child(2) { width: 58px; padding-right: 12px; }
.low { height: 34px; }
.low button { padding-bottom: 8px; }
.low .menu { margin-top: 6px; }
.recent { height: 59px; padding: 12px 6px; }
.recent-row { display: flex; justify-content: space-between; width: 412px; padding: 2px; border: 1px solid #484848; }
.recent-row i { display: block; width: 23px; height: 23px; }
.swatches { background: #4c4c4c; height: 260px; padding: 2px; flex: none; }
.swgrid { display: grid; grid-template-columns: repeat(19, 24px); grid-auto-rows: 24px; gap: 3px; }
.swgrid i { outline: 1px solid #424242; }
.mid { height: 20px; border-top: 1px solid #303030; }
.lrow { display: flex; align-items: center; padding-left: 5px; border-bottom: 2px solid #454545; flex: none; }
.filter { height: 48px; padding-top: 8px; }
.blend { height: 43px; }
.lock { height: 44px; border: 0; padding-bottom: 4px; }
.kind { width: 130px; }
.kind .pre { margin-right: 4px; }
.mode { width: 176px; }
.blend label { width: 85px; padding-left: 14px; margin-right: 13px; }
.ficons { display: flex; width: 188px; padding-left: 24px; justify-content: space-between; margin-right: 26px; }
.lock .lbl { width: 61px; padding: 0 0 4px 5px; }
.licons { display: flex; align-items: center; justify-content: space-between; width: 149px; margin-right: 16px; }
.lock label { width: 48px; }
.dim { color: #999; }
.layers { list-style: none; margin: 0; padding: 0 24px 0 0; flex: 1; background: #4d4d4d; min-height: 0; }
.layers li { display: flex; height: 97px; background: #535353; border-bottom: 1px solid #444; }
.eye { width: 45px; border-right: 1px solid #484848; color: #ddd; padding-left: 2px; }
.lbody { display: flex; align-items: center; flex: 1; padding: 0 23px 0 3px; gap: 11px; color: #f0f0f0; }
.active .lbody { background: #6a6a6a; }
.padlock { margin-left: auto; }
.lfoot { display: flex; align-items: center; justify-content: space-between; height: 39px; border-top: 2px solid #434343; padding: 0 39px 3px 249px; flex: none; }
.fx em { font: italic 400 21px/24px "Open Sans", sans-serif; }
.lfoot .plain { width: 24px; height: 24px; }
.dd { position: absolute; right: -3px; bottom: 0; }
.ball-green { position: absolute; right: -44px; top: 777px; width: 71px; height: 71px; clip-path: inset(-6px 42px -12px -6px); border-radius: 50%; border: 3px solid #e8f4e8; background: linear-gradient(#85e08f, #3ccb55 60%); box-shadow: inset 0 0 0 2px #2a9a48, 0 3px 8px #0006; color: #fff; font: 700 16px/62px "Noto Sans", sans-serif; padding-left: 6px; }

.taskbar { display: flex; background: linear-gradient(90deg, #14222b, #12222b 30%, #171a1c 42%, #1a1c1c 72%, #0c1a22 88%, #0c1a22); color: #fff; font-weight: 400; }
.cell { width: 72px; height: 60px; flex: none; }
.fan { width: 78px; padding-left: 4px; }
.tsearch { display: flex; align-items: center; width: 188px; height: 38px; margin-top: 11px; padding: 0 8px 0 4px; background: #3c3c3e; font-size: 15px; }
.tsearch input { flex: 1; min-width: 0; padding-left: 4px; color: #aaa; font-weight: 300; }
.apps { display: flex; gap: 3px; margin-left: 7px; }
.run { position: relative; }
.run::after { content: ""; position: absolute; left: 6px; right: 6px; bottom: 0; height: 3px; background: #76b9ed; }
.front { background: #47535b; }
.front::after { left: 0; right: 0; }
.front .ps-badge { margin-top: -4px; }
.tray { display: flex; margin-left: auto; padding-right: 9px; border-right: 2px solid #6a747a; margin-right: 5px; }
.help { width: 56px; }
.s { width: 36px; }
.ime { font-size: 20px; padding-right: 4px; }
.clock { width: 108px; display: flex; flex-direction: column; align-items: center; justify-content: center; font-size: 18px; line-height: 28px; }
.note { width: 68px; }
```
FILE: script.js
```js
const NS = 'http://www.w3.org/2000/svg';
const STEP = 83.1;
const MINOR = 10;

function add(parent, name, attrs, text) {
  const el = document.createElementNS(NS, name);
  for (const k in attrs) el.setAttribute(k, attrs[k]);
  if (text) el.textContent = text;
  parent.append(el);
  return el;
}

function ruler(svg, origin, from, to, vertical) {
  const depth = 25;
  for (let i = from; i <= to; i++) {
    const p = Math.round(origin + i * STEP / MINOR);
    const len = i % MINOR === 0 ? 24 : i % 5 === 0 ? 8 : 5;
    const box = vertical
      ? { x: depth - len, y: p, width: len, height: 1 }
      : { x: p, y: depth - len, width: 1, height: len };
    add(svg, 'rect', { ...box, fill: '#7a7a7a' });
    if (i % MINOR === 0) {
      const label = String(Math.abs(i / MINOR * 2));
      if (vertical) {
        const text = add(svg, 'text', { x: 1, y: p + 15 });
        [...label].forEach((d, n) => add(text, 'tspan', { x: 1, y: p + 15 + n * 15 }, d));
      } else {
        add(svg, 'text', { x: p + 3, y: 18 }, label);
      }
    }
  }
}
ruler(document.getElementById('hruler'), 202, -24, 112, false);
const v = document.getElementById('vruler');
ruler(v, 50, -5, 94, true);
add(v, 'rect', { x: 1, y: 228, width: 13, height: 2, fill: '#ddd' });

function fill(id, colors) {
  const box = document.getElementById(id);
  colors.trim().split(/\s+/).forEach(c => {
    const cell = document.createElement('i');
    cell.style.background = '#' + c;
    box.append(cell);
  });
}
fill('recent', '00f 5c2e37 5c2e37 f4f4f8 f4f4f8 0a0a0a f8cfd8 f7bcc8 0a0a0a f8dae0 f8dae0 3a84cc 1066b4 1678d6 1070c8 1274d4');
fill('swatches', `
f00 ff0 0f0 0ff 00f f0f fff eee e6e6e6 dcdcdc d2d2d2 c8c8c8 bebebe b4b4b4 aaa a0a0a0 e60012 fff100 009944
00a0e9 1d2088 e4007f 969696 8c8c8c 7d7e7d 6e6e6e 626262 505050 444 323232 1e1e1e 000 f29b76 f6b37f facd89 fff799 cce198 acd598
89c997 84ccc9 7ecef4 88abda 8c97cb 8f82bc aa89bd c490bf f19ec2 f29c9f eb6841 f19149 f8b551 fff45c b3d465 80c269 32b16c 13b5b1 00b7ee
448aca 556fb5 5f52a0 8957a1 ae5da1 ea68a2 ec6877 e60012 eb6100 f39800 fff100 8fc31f 22ac38 009944 009e96 00a0e9 0068b7 00479d 1d2088
601986 920783 e4007f e5004f a40000 a84200 ac6a00 b7aa00 638c0b 097c25 007130 00736d 0075a9 004986 002e73 100964 440062 6a005f a4005b
a40035 7d0000 7f2d00 834e00 8a8000 486a00 005e15 005020 005752 005982 003567 001c58 04004c 2e0047 500047 7e0043 7d0022 cfbfa5 a2937a
7e6b5a 594a40 362e2b caa76f b28850 996c33 81511c 6a3906 8238be 6854ea`);
```
